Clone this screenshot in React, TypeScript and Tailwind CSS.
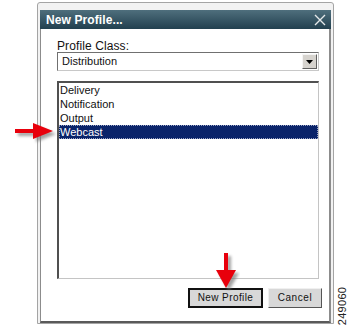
import React from 'react';

const items = ['Delivery', 'Notification', 'Output', 'Webcast'];

function RedArrowRight() {
  return (
    <svg width="44" height="26" viewBox="0 0 44 26" className="absolute left-[13px] top-[119px]">
      <defs>
        <filter id="sh1" x="-20%" y="-40%" width="150%" height="200%">
          <feGaussianBlur stdDeviation="1.6" />
        </filter>
      </defs>
      <g transform="translate(3,3)" fill="#7a7a7a" opacity="0.7" filter="url(#sh1)">
        <rect x="2" y="10" width="20" height="4" />
        <polygon points="20,4 40,12 20,20" />
      </g>
      <rect x="2" y="10" width="20" height="4" fill="#e8000c" />
      <polygon points="20,4 40,12 20,20" fill="#e8000c" />
    </svg>
  );
}

function RedArrowDown() {
  return (
    <svg width="26" height="40" viewBox="0 0 26 40" className="absolute left-[214px] top-[251px]">
      <defs>
        <filter id="sh2" x="-40%" y="-20%" width="200%" height="150%">
          <feGaussianBlur stdDeviation="1.6" />
        </filter>
      </defs>
      <g transform="translate(3,3)" fill="#7a7a7a" opacity="0.7" filter="url(#sh2)">
        <rect x="10" y="2" width="4" height="19" />
        <polygon points="2,19 22,19 12,37" />
      </g>
      <rect x="10" y="2" width="4" height="19" fill="#e8000c" />
      <polygon points="2,19 22,19 12,37" fill="#e8000c" />
    </svg>
  );
}

export default function App() {
  return (
    <div className="relative w-[350px] h-[325px] overflow-hidden bg-white font-['Liberation_Sans',Arial,sans-serif]">
      <div className="ml-[37px] mt-[2px] w-[297px] h-[322px] rounded-t-[3px] border border-[#a4a4a4] bg-[#f2f2f2] pt-[7px] px-[2px] flex flex-col">
        {/* title bar */}
        <div className="h-[19px] flex items-center justify-between pl-[6px] pr-[5px] bg-gradient-to-b from-[#4f6f7d] to-[#22404f]">
          <span className="text-white font-bold text-[12px] leading-none tracking-[0.1px]">New Profile...</span>
          <svg width="12" height="12" viewBox="0 0 12 12">
            <path d="M1 1 L11 11 M11 1 L1 11" stroke="#e4e8ea" strokeWidth="1.4" />
          </svg>
        </div>

        {/* body */}
        <div className="flex-1 flex flex-col bg-white border-l border-r-2 border-b-2 border-l-[#8c8c8c] border-r-[#8c8c8c] border-b-[#5a5a5a] pl-[16px] pr-[10px] pt-[10px]">
          <div className="text-[12px] leading-[14px] text-[#111] tracking-[0.1px]">Profile Class:</div>

          <div className="mt-[-1px] w-[262px] h-[19px] flex items-center border border-t-[#707070] border-l-[#707070] border-r-[#c8c8c8] border-b-[#c8c8c8] bg-white">
            <span className="flex-1 pl-[4px] text-[11px] leading-none text-[#111]">Distribution</span>
            <div className="mr-[1px] w-[15px] h-[15px] flex items-center justify-center bg-[#d6d3ce] border border-t-[#f4f4f4] border-l-[#f4f4f4] border-r-[#606060] border-b-[#606060]">
              <svg width="7" height="4" viewBox="0 0 7 4">
                <polygon points="0,0 7,0 3.5,4" fill="#000" />
              </svg>
            </div>
          </div>

          <div className="mt-[10px] w-[262px] h-[198px] border-t-2 border-l-2 border-r border-b border-t-[#505050] border-l-[#505050] border-r-[#c4c4c4] border-b-[#c4c4c4]">
            {items.map((it) => (
              <div
                key={it}
                className={
                  it === 'Webcast'
                    ? 'h-[14px] pl-[1px] text-[11px] leading-[14px] text-white bg-[#0a246a] outline-1 outline-dotted outline-offset-[-1px] outline-[#9aa4c4]'
                    : 'h-[14px] pl-[1px] text-[11px] leading-[14px] text-[#111]'
                }
              >
                {it}
              </div>
            ))}
          </div>

          <div className="mt-[9px] flex justify-end gap-[5px] mr-[-3px]">
            <button className="w-[75px] h-[20px] border-2 border-[#111] bg-[#d8d8d8] text-[10px] leading-none tracking-[0.4px] text-[#111]">
              New Profile
            </button>
            <button className="w-[54px] h-[20px] border border-t-[#f0f0f0] border-l-[#f0f0f0] border-r-[#555] border-b-[#555] bg-[#d8d8d8] text-[10px] leading-none tracking-[0.6px] text-[#111]">
              Cancel
            </button>
          </div>
        </div>
      </div>

      <RedArrowRight />
      <RedArrowDown />

      <div className="absolute left-[320px] top-[300px] w-[44px] h-[12px] -rotate-90 text-[11px] leading-[12px] text-[#222] tracking-[0.3px] text-center">
        249060
      </div>
    </div>
  );
}
